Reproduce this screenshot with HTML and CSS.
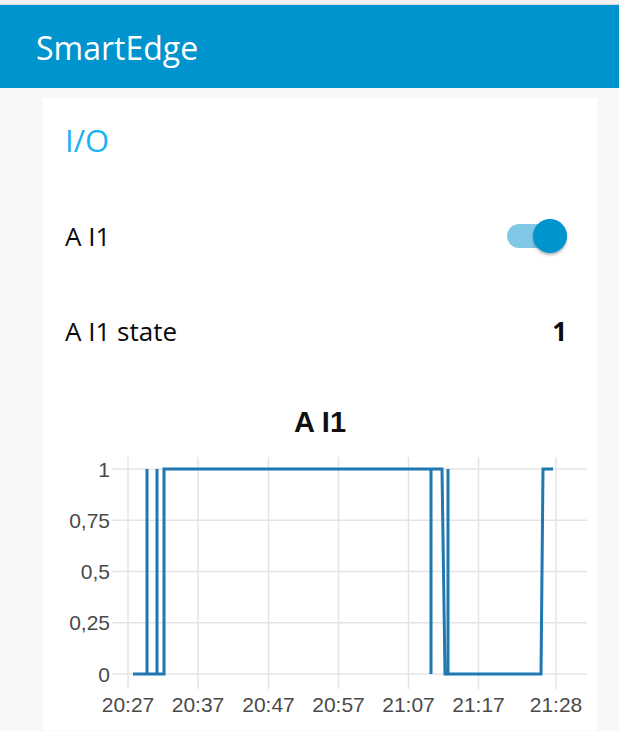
FILE: index.html
```html
<!DOCTYPE html>
<html>
<head>
<meta charset="utf-8">
<link rel="stylesheet" href="styles.css">
</head>
<body>
<div class="topband"></div>
<header class="toolbar">SmartEdge</header>
<main class="content">
  <section class="card">
    <h2 class="group-title">I/O</h2>
    <div class="row">
      <span class="label">A I1</span>
      <span class="switch"><span class="track"></span><span class="thumb"></span></span>
    </div>
    <div class="row">
      <span class="label">A I1 state</span>
      <span class="value">1</span>
    </div>
    <svg class="chart" width="554" height="352" viewBox="0 0 554 352">
      <text class="chart-title" x="277" y="54" text-anchor="middle">A I1</text>
      <g class="grid">
        <line x1="69" y1="91" x2="544" y2="91"/>
        <line x1="69" y1="142.25" x2="544" y2="142.25"/>
        <line x1="69" y1="193.5" x2="544" y2="193.5"/>
        <line x1="69" y1="244.75" x2="544" y2="244.75"/>
        <line x1="69" y1="296" x2="544" y2="296"/>
        <line x1="85" y1="79" x2="85" y2="311"/>
        <line x1="155" y1="79" x2="155" y2="311"/>
        <line x1="225.5" y1="79" x2="225.5" y2="311"/>
        <line x1="295.5" y1="79" x2="295.5" y2="311"/>
        <line x1="365.5" y1="79" x2="365.5" y2="311"/>
        <line x1="435.5" y1="79" x2="435.5" y2="311"/>
        <line x1="513" y1="79" x2="513" y2="311"/>
      </g>
      <g class="ylabels" text-anchor="end">
        <text x="67" y="98.5">1</text>
        <text x="67" y="149.75">0,75</text>
        <text x="67" y="201">0,5</text>
        <text x="67" y="252.25">0,25</text>
        <text x="67" y="303.5">0</text>
      </g>
      <g class="xlabels" text-anchor="middle">
        <text x="85" y="334">20:27</text>
        <text x="155" y="334">20:37</text>
        <text x="225.5" y="334">20:47</text>
        <text x="295.5" y="334">20:57</text>
        <text x="365.5" y="334">21:07</text>
        <text x="435.5" y="334">21:17</text>
        <text x="513" y="334">21:28</text>
      </g>
      <path class="series" d="M90 296 L104 296 L104 91 L104 296 L114 296 L114 91 L114 296 L121 296 L121 91 L388 91 L388 296 L388 91 L399 91 L402 296 L405 296 L405 91 L405 296 L498 296 L500 91 L510 91"/>
    </svg>
  </section>
</main>
</body>
</html>
```

FILE: styles.css
```css
html, body {
  margin: 0;
  padding: 0;
  background: #f8f8f8;
  font-family: "Open Sans", "Noto Sans", sans-serif;
  overflow: hidden;
}

.topband {
  height: 4px;
  background: #f2f2f2;
  border-bottom: 1px solid #d8d8d8;
}

.toolbar {
  height: 83px;
  background: #0094ce;
  color: #ffffff;
  font-size: 32px;
  display: flex;
  align-items: center;
  padding-left: 36px;
  padding-top: 2px;
  box-sizing: border-box;
}

.content {
  padding: 10px 22px 0 43px;
}

.card {
  width: 554px;
  background: #ffffff;
  box-sizing: border-box;
  padding-top: 22px;
  height: 632px;
}

.group-title {
  margin: 0 30px 28px 22px;
  font-weight: 400;
  font-size: 31px;
  line-height: 40px;
  color: #1bb0f0;
}

.row {
  height: 95px;
  display: flex;
  align-items: center;
  justify-content: space-between;
  padding: 0 30px 0 22px;
  color: #0a0a0a;
  font-size: 26px;
}

.value {
  font-weight: 700;
}

.switch {
  position: relative;
  width: 60px;
  height: 34px;
  display: flex;
  align-items: center;
}

.track {
  width: 60px;
  height: 24px;
  border-radius: 12px;
  background: #7fc9e7;
}

.thumb {
  position: absolute;
  right: 0;
  top: 0;
  width: 34px;
  height: 34px;
  border-radius: 50%;
  background: #0094ce;
  box-shadow: 0 2px 3px rgba(0, 0, 0, 0.3);
}

.chart {
  display: block;
}

.chart-title {
  font-family: "Liberation Sans", Arial, sans-serif;
  font-weight: 700;
  font-size: 29px;
  fill: #111111;
}

.grid line {
  stroke: #e4e4e4;
  stroke-width: 1.5;
}

.ylabels text,
.xlabels text {
  font-family: "Liberation Sans", Arial, sans-serif;
  font-size: 21px;
  fill: #4a4a4a;
}

.series {
  fill: none;
  stroke: #1f77b4;
  stroke-width: 3;
  stroke-linejoin: miter;
}
```
